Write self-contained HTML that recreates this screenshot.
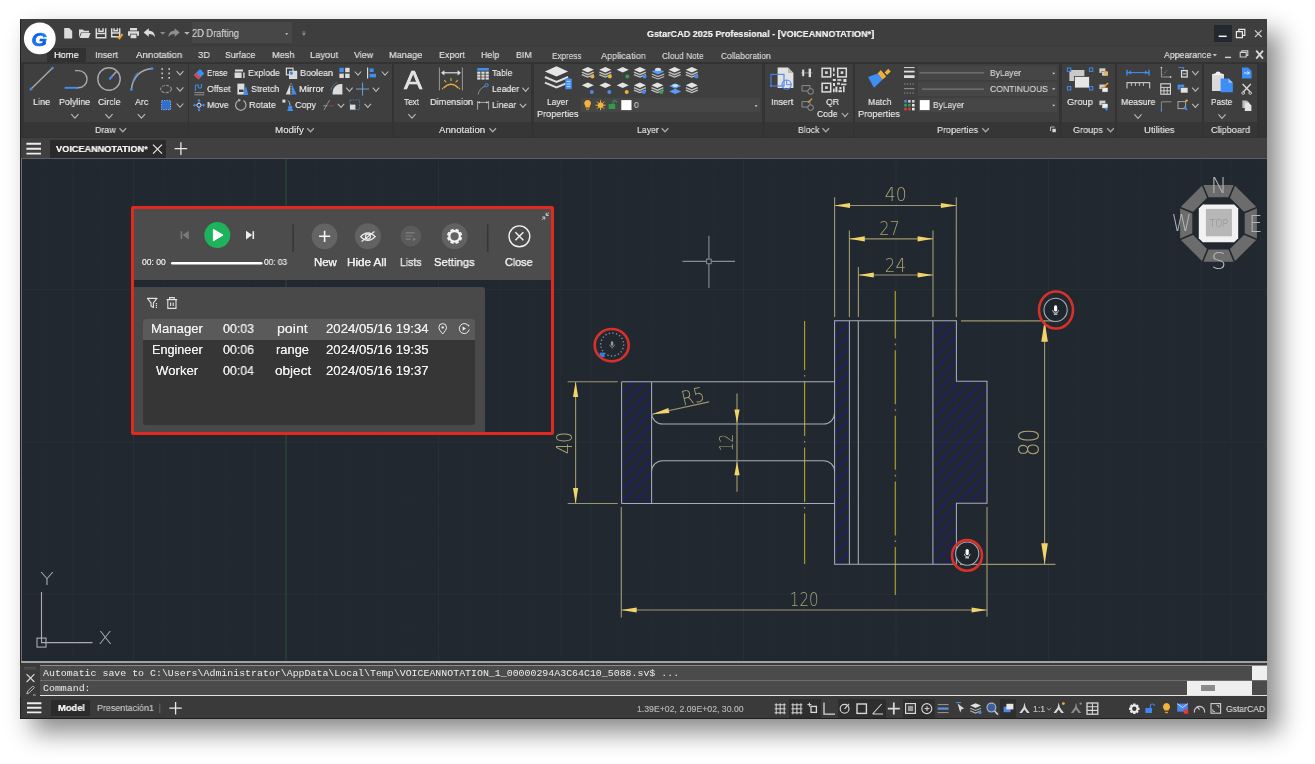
<!DOCTYPE html>
<html lang="en"><head><meta charset="utf-8"><title>GstarCAD 2025 Professional - [VOICEANNOTATION*]</title>
<style>
html,body{margin:0;padding:0}
body{width:1315px;height:764px;background:#fff;position:relative;overflow:hidden;font-family:"Liberation Sans",sans-serif}
body>div{position:absolute}
.t{position:absolute;white-space:nowrap;transform-origin:0 50%;will-change:transform;text-shadow:0 0 .6px currentColor}
.ls{font-family:"Liberation Sans",sans-serif}
.lm{font-family:"Liberation Mono",monospace;text-shadow:none}
svg{position:absolute;left:0;top:0;will-change:transform}
svg text{font-family:"DejaVu Sans Light","DejaVu Sans",sans-serif;font-weight:200}
</style></head><body>
<div style="left:20.0px;top:19.0px;width:1246.8px;height:700.2px;background:#3a3a3a;box-shadow:12px 13px 24px 0px rgba(0,0,0,.47);"></div>
<div style="left:20.0px;top:19.0px;width:1246.8px;height:27.0px;background:#3e3e3e;"></div>
<div style="left:20.0px;top:44.6px;width:1246.8px;height:1.8px;background:#3a3a3a;"></div>
<div style="left:20.0px;top:46.4px;width:1246.8px;height:15.6px;background:#404040;"></div>
<div style="left:47.2px;top:48.0px;width:38.4px;height:14.0px;background:#313131;"></div>
<div style="left:20.0px;top:62.0px;width:1246.8px;height:75.5px;background:#333333;"></div>
<div style="left:23.6px;top:63.8px;width:164.0px;height:58.5px;background:#3f3f3f;"></div>
<div style="left:23.6px;top:122.3px;width:164.0px;height:14.5px;background:#363636;"></div>
<div style="left:188.8px;top:63.8px;width:203.5px;height:58.5px;background:#3f3f3f;"></div>
<div style="left:188.8px;top:122.3px;width:203.5px;height:14.5px;background:#363636;"></div>
<div style="left:393.8px;top:63.8px;width:137.5px;height:58.5px;background:#3f3f3f;"></div>
<div style="left:393.8px;top:122.3px;width:137.5px;height:14.5px;background:#363636;"></div>
<div style="left:533.8px;top:63.8px;width:228.6px;height:58.5px;background:#3f3f3f;"></div>
<div style="left:533.8px;top:122.3px;width:228.6px;height:14.5px;background:#363636;"></div>
<div style="left:764.6px;top:63.8px;width:88.0px;height:58.5px;background:#3f3f3f;"></div>
<div style="left:764.6px;top:122.3px;width:88.0px;height:14.5px;background:#363636;"></div>
<div style="left:855.0px;top:63.8px;width:204.4px;height:58.5px;background:#3f3f3f;"></div>
<div style="left:855.0px;top:122.3px;width:204.4px;height:14.5px;background:#363636;"></div>
<div style="left:1062.0px;top:63.8px;width:53.0px;height:58.5px;background:#3f3f3f;"></div>
<div style="left:1062.0px;top:122.3px;width:53.0px;height:14.5px;background:#363636;"></div>
<div style="left:1117.2px;top:63.8px;width:85.1px;height:58.5px;background:#3f3f3f;"></div>
<div style="left:1117.2px;top:122.3px;width:85.1px;height:14.5px;background:#363636;"></div>
<div style="left:1204.4px;top:63.8px;width:52.6px;height:58.5px;background:#3f3f3f;"></div>
<div style="left:1204.4px;top:122.3px;width:52.6px;height:14.5px;background:#363636;"></div>
<div style="left:20.0px;top:137.5px;width:1246.8px;height:20.8px;background:#404040;"></div>
<div style="left:50.3px;top:140.4px;width:115.7px;height:17.9px;background:#2a2a2a;"></div>
<div style="left:20.0px;top:158.3px;width:1246.8px;height:502.7px;background:#212830;"></div>
<div style="left:20.0px;top:158.0px;width:1246.8px;height:1.2px;background:#5b5f64;"></div>
<div style="left:20.0px;top:158.3px;width:1.8px;height:502.7px;background:#6c7076;"></div>
<div style="left:20.0px;top:660.6px;width:1246.8px;height:2.2px;background:#a2a2a2;"></div>
<div style="left:20.0px;top:662.8px;width:1246.8px;height:34.7px;background:#3a3a3a;"></div>
<div style="left:39.6px;top:665.3px;width:1227.2px;height:29.7px;background:#8d8d8d;"></div>
<div style="left:39.6px;top:694.8px;width:1227.2px;height:1.4px;background:#e4e4e4;"></div>
<div style="left:40.4px;top:680.0px;width:1226.4px;height:1.0px;background:#6e6e6e;"></div>
<div style="left:40.4px;top:666.2px;width:1226.4px;height:13.8px;background:#4b4b4b;"></div>
<div style="left:40.4px;top:681.0px;width:1226.4px;height:14.0px;background:#4b4b4b;"></div>
<div style="left:1252.0px;top:666.2px;width:14.8px;height:13.8px;background:#efefef;"></div>
<div style="left:1187.0px;top:681.0px;width:65.0px;height:14.0px;background:#efefef;"></div>
<div style="left:1201.4px;top:685.4px;width:13.9px;height:5.6px;background:#8a8a8a;"></div>
<div style="left:20.0px;top:697.5px;width:1246.8px;height:21.7px;background:#3a3a3a;"></div>
<div style="left:51.2px;top:700.4px;width:39.3px;height:15.4px;background:#2b2b2b;"></div>
<div style="left:20.0px;top:718.0px;width:1246.8px;height:1.2px;background:#1e1e1e;"></div>
<div style="left:20.0px;top:19.0px;width:1.0px;height:700.2px;background:#222222;"></div>
<div style="left:191.8px;top:21.6px;width:100.2px;height:21.6px;background:#474747;"></div>
<div style="left:1213.7px;top:24.8px;width:18.0px;height:17.2px;background:#23272e;"></div>
<div style="left:580.8px;top:98.2px;width:179.0px;height:14.0px;background:#464646;"></div>
<div style="left:917.7px;top:66.4px;width:139.1px;height:13.5px;background:#464646;"></div>
<div style="left:917.7px;top:81.6px;width:139.1px;height:14.0px;background:#464646;"></div>
<div style="left:917.7px;top:97.9px;width:139.1px;height:14.3px;background:#464646;"></div>
<div style="left:20.0px;top:665.0px;width:19.4px;height:32.0px;background:#3a3a3a;"></div>
<div style="left:789.0px;top:699.4px;width:32.0px;height:18.6px;background:#2e2e2e;"></div>
<div style="left:838.0px;top:699.4px;width:48.0px;height:18.6px;background:#2e2e2e;"></div>
<div style="left:902.7px;top:699.4px;width:32.3px;height:18.6px;background:#2e2e2e;"></div>
<div style="left:1000.3px;top:699.4px;width:15.7px;height:18.6px;background:#2e2e2e;"></div>
<svg width="1315" height="764" viewBox="0 0 1315 764">
<path d="M42.0 159 V660.6" stroke="#232a33" stroke-width="1"/><path d="M72.5 159 V660.6" stroke="#232a33" stroke-width="1"/><path d="M103.0 159 V660.6" stroke="#232a33" stroke-width="1"/><path d="M133.5 159 V660.6" stroke="#272f38" stroke-width="1"/><path d="M164.0 159 V660.6" stroke="#232a33" stroke-width="1"/><path d="M194.5 159 V660.6" stroke="#232a33" stroke-width="1"/><path d="M225.0 159 V660.6" stroke="#232a33" stroke-width="1"/><path d="M255.5 159 V660.6" stroke="#232a33" stroke-width="1"/><path d="M286.0 159 V660.6" stroke="#272f38" stroke-width="1"/><path d="M316.5 159 V660.6" stroke="#232a33" stroke-width="1"/><path d="M347.0 159 V660.6" stroke="#232a33" stroke-width="1"/><path d="M377.5 159 V660.6" stroke="#232a33" stroke-width="1"/><path d="M408.0 159 V660.6" stroke="#232a33" stroke-width="1"/><path d="M438.5 159 V660.6" stroke="#272f38" stroke-width="1"/><path d="M469.0 159 V660.6" stroke="#232a33" stroke-width="1"/><path d="M499.5 159 V660.6" stroke="#232a33" stroke-width="1"/><path d="M530.0 159 V660.6" stroke="#232a33" stroke-width="1"/><path d="M560.5 159 V660.6" stroke="#232a33" stroke-width="1"/><path d="M591.0 159 V660.6" stroke="#272f38" stroke-width="1"/><path d="M621.5 159 V660.6" stroke="#232a33" stroke-width="1"/><path d="M652.0 159 V660.6" stroke="#232a33" stroke-width="1"/><path d="M682.5 159 V660.6" stroke="#232a33" stroke-width="1"/><path d="M713.0 159 V660.6" stroke="#232a33" stroke-width="1"/><path d="M743.5 159 V660.6" stroke="#272f38" stroke-width="1"/><path d="M774.0 159 V660.6" stroke="#232a33" stroke-width="1"/><path d="M804.5 159 V660.6" stroke="#232a33" stroke-width="1"/><path d="M835.0 159 V660.6" stroke="#232a33" stroke-width="1"/><path d="M865.5 159 V660.6" stroke="#232a33" stroke-width="1"/><path d="M896.0 159 V660.6" stroke="#272f38" stroke-width="1"/><path d="M926.5 159 V660.6" stroke="#232a33" stroke-width="1"/><path d="M957.0 159 V660.6" stroke="#232a33" stroke-width="1"/><path d="M987.5 159 V660.6" stroke="#232a33" stroke-width="1"/><path d="M1018.0 159 V660.6" stroke="#232a33" stroke-width="1"/><path d="M1048.5 159 V660.6" stroke="#272f38" stroke-width="1"/><path d="M1079.0 159 V660.6" stroke="#232a33" stroke-width="1"/><path d="M1109.5 159 V660.6" stroke="#232a33" stroke-width="1"/><path d="M1140.0 159 V660.6" stroke="#232a33" stroke-width="1"/><path d="M1170.5 159 V660.6" stroke="#232a33" stroke-width="1"/><path d="M1201.0 159 V660.6" stroke="#272f38" stroke-width="1"/><path d="M1231.5 159 V660.6" stroke="#232a33" stroke-width="1"/><path d="M1262.0 159 V660.6" stroke="#232a33" stroke-width="1"/><path d="M21.8 167.6 H1266.8" stroke="#232a33" stroke-width="1"/><path d="M21.8 198.1 H1266.8" stroke="#232a33" stroke-width="1"/><path d="M21.8 228.6 H1266.8" stroke="#232a33" stroke-width="1"/><path d="M21.8 259.1 H1266.8" stroke="#232a33" stroke-width="1"/><path d="M21.8 289.6 H1266.8" stroke="#272f38" stroke-width="1"/><path d="M21.8 320.1 H1266.8" stroke="#232a33" stroke-width="1"/><path d="M21.8 350.6 H1266.8" stroke="#232a33" stroke-width="1"/><path d="M21.8 381.1 H1266.8" stroke="#232a33" stroke-width="1"/><path d="M21.8 411.6 H1266.8" stroke="#232a33" stroke-width="1"/><path d="M21.8 442.1 H1266.8" stroke="#272f38" stroke-width="1"/><path d="M21.8 472.6 H1266.8" stroke="#232a33" stroke-width="1"/><path d="M21.8 503.1 H1266.8" stroke="#232a33" stroke-width="1"/><path d="M21.8 533.6 H1266.8" stroke="#232a33" stroke-width="1"/><path d="M21.8 564.1 H1266.8" stroke="#232a33" stroke-width="1"/><path d="M21.8 594.6 H1266.8" stroke="#272f38" stroke-width="1"/><path d="M21.8 625.1 H1266.8" stroke="#232a33" stroke-width="1"/><path d="M21.8 655.6 H1266.8" stroke="#232a33" stroke-width="1"/>
<path d="M286 159 V660.6" stroke="#2a4a38" stroke-width="1"/>
<path d="M682.5 261.4 H735 M708.9 235.7 V288" stroke="#878c94" stroke-width="1.1"/><rect x="706.6" y="259.1" width="4.6" height="4.6" fill="#212830" stroke="#878c94" stroke-width="1"/>
<path d="M41.5 592 V642.6 H92.5" fill="none" stroke="#a9adb3" stroke-width="1.1"/><rect x="37" y="638.1" width="9" height="9" fill="none" stroke="#a9adb3" stroke-width="1.1"/>
<text x="47" y="585.2" text-anchor="middle" font-size="16.9" fill="#a2a6ac" textLength="14" lengthAdjust="spacingAndGlyphs">Y</text>
<text x="105.3" y="643.6" text-anchor="middle" font-size="16.9" fill="#a2a6ac" textLength="14.4" lengthAdjust="spacingAndGlyphs">X</text>
<defs><pattern id="h" width="8.5" height="8.5" patternUnits="userSpaceOnUse" patternTransform="rotate(-45)"><path d="M0 4.25 H8.5" stroke="#1d1d72" stroke-width="1.5"/></pattern></defs>
<rect x="621.6" y="381.7" width="30.0" height="121.8" fill="url(#h)"/>
<rect x="834.6" y="320.8" width="14.8" height="243.5" fill="url(#h)"/>
<rect x="932.9" y="320.8" width="23.5" height="243.5" fill="url(#h)"/>
<rect x="956.2" y="381.3" width="30.8" height="122.0" fill="url(#h)"/>
<path d="M804.6 321 V564" stroke="#a59c30" stroke-width="1.2" stroke-dasharray="54.4 5 1.6 5" stroke-dashoffset="5.5"/>
<path d="M895.3 291 V595" stroke="#a59c30" stroke-width="1.2" stroke-dasharray="54 5 1.6 5" stroke-dashoffset="6.4"/>
<path d="M621.6 381.7 H834.6 M621.6 503.5 H834.6 M621.6 381.7 V503.5 M651.6 381.7 V503.5 M651.6 413 A11 11 0 0 0 662.6 424 H823.6 A11 11 0 0 0 834.6 413 M651.6 471.7 A11 11 0 0 1 662.6 460.7 H823.6 A11 11 0 0 1 834.6 471.7 M834.6 320.8 H956.4 V381.3 H987 V503.3 H956.4 V564.3 H834.6 Z M849.4 320.8 V564.3 M858.3 320.8 V564.3 M932.9 320.8 V564.3" fill="none" stroke="#a9aeb6" stroke-width="1.05"/>
<path d="M834.6 197.3 V317 M956.3 197.3 V317 M834.6 205.5 H956.3 M849.4 230.4 V317 M933 230.4 V317 M849.4 238.8 H933 M858.4 266.9 V317 M858.4 275 H933 M567.7 381.7 H617.7 M567.7 503.5 H617.7 M575.6 381.7 V503.5 M737 393.6 V491.7 M652.2 414.2 L709.1 401.9 M961 320.8 H1054.5 M960 564.3 H1055.4 M1044.6 320.8 V564.3 M621.3 507 V617.5 M987 507 V616.7 M621.3 610 H987" fill="none" stroke="#9c966e" stroke-width="1.15"/>
<path d="M834.6 205.5 L850.0 208.1 L850.0 202.9z" fill="#f3d46a"/>
<path d="M956.3 205.5 L940.9 202.9 L940.9 208.1z" fill="#f3d46a"/>
<path d="M849.4 238.8 L864.8 241.4 L864.8 236.2z" fill="#f3d46a"/>
<path d="M933.0 238.8 L917.6 236.2 L917.6 241.4z" fill="#f3d46a"/>
<path d="M858.4 275.0 L873.8 277.6 L873.8 272.4z" fill="#f3d46a"/>
<path d="M933.0 275.0 L917.6 272.4 L917.6 277.6z" fill="#f3d46a"/>
<path d="M575.6 381.7 L573.0 397.1 L578.2 397.1z" fill="#f3d46a"/>
<path d="M575.6 503.5 L578.2 488.1 L573.0 488.1z" fill="#f3d46a"/>
<path d="M737.0 423.4 L739.6 409.4 L734.4 409.4z" fill="#f3d46a"/>
<path d="M737.0 461.2 L734.4 475.2 L739.6 475.2z" fill="#f3d46a"/>
<path d="M652.2 414.2 L669.4 413.1 L668.3 408.1z" fill="#f3d46a"/>
<path d="M1044.6 320.8 L1041.3 341.8 L1047.9 341.8z" fill="#f3d46a"/>
<path d="M1044.6 564.3 L1047.9 543.3 L1041.3 543.3z" fill="#f3d46a"/>
<path d="M621.3 610.0 L636.7 612.6 L636.7 607.4z" fill="#f3d46a"/>
<path d="M987.0 610.0 L971.6 607.4 L971.6 612.6z" fill="#f3d46a"/>
<text x="895.8" y="201.2" font-size="20.0" fill="#a8a172" text-anchor="middle" textLength="21.9" lengthAdjust="spacingAndGlyphs" transform="rotate(0.0 895.8 193.9)">40</text>
<text x="889.6" y="235.1" font-size="20.0" fill="#a8a172" text-anchor="middle" textLength="20.6" lengthAdjust="spacingAndGlyphs" transform="rotate(0.0 889.6 227.8)">27</text>
<text x="895.4" y="271.6" font-size="20.0" fill="#a8a172" text-anchor="middle" textLength="21.2" lengthAdjust="spacingAndGlyphs" transform="rotate(0.0 895.4 264.3)">24</text>
<text x="564.6" y="450.5" font-size="20.6" fill="#a8a172" text-anchor="middle" textLength="22.2" lengthAdjust="spacingAndGlyphs" transform="rotate(-90.0 564.6 443.0)">40</text>
<text x="725.7" y="450.0" font-size="20.2" fill="#a8a172" text-anchor="middle" textLength="17.2" lengthAdjust="spacingAndGlyphs" transform="rotate(-90.0 725.7 442.6)">12</text>
<text x="692.8" y="403.3" font-size="20.0" fill="#a8a172" text-anchor="middle" textLength="22.8" lengthAdjust="spacingAndGlyphs" transform="rotate(-13.0 692.8 396.0)">R5</text>
<text x="1028.9" y="452.7" font-size="28.0" fill="#a8a172" text-anchor="middle" textLength="27.7" lengthAdjust="spacingAndGlyphs" transform="rotate(-90.0 1028.9 442.5)">80</text>
<text x="804.2" y="606.0" font-size="19.2" fill="#a8a172" text-anchor="middle" textLength="28.7" lengthAdjust="spacingAndGlyphs" transform="rotate(0.0 804.2 599.0)">120</text>
<circle cx="612.2" cy="344.5" r="11.5" fill="none" stroke="#8f949a" stroke-width="1.3" stroke-dasharray="1.3 2.3"/>
<rect x="610.9" y="341.3" width="2.4" height="4.4" rx="1.2" fill="#9a9a9a"/><path d="M609.8 344.6 a2.4 2.4 0 0 0 4.8 0 M612.2 347 v1.6" fill="none" stroke="#8a8a8a" stroke-width="0.8"/>
<rect x="599.6" y="352.6" width="5" height="4.6" fill="#2f7fe8"/>
<ellipse cx="611.7" cy="345.2" rx="17" ry="16.2" fill="none" stroke="#d8302a" stroke-width="2.6"/>
<circle cx="1055.6" cy="309.9" r="11.6" fill="#1f252d" stroke="#aab0b4" stroke-width="1.1"/>
<rect x="1054.0" y="305.3" width="3.2" height="6.2" rx="1.6" fill="#ffffff"/><path d="M1052.7 310.1 a2.9 2.9 0 0 0 5.8 0" fill="none" stroke="#d8d8d8" stroke-width="0.8"/><path d="M1053.8 314.1 h3.6" stroke="#e8e8e8" stroke-width="1.2"/>
<ellipse cx="1056" cy="310" rx="17" ry="18.5" fill="none" stroke="#d8302a" stroke-width="2.6"/>
<circle cx="967.2" cy="553.6" r="11.6" fill="#1f252d" stroke="#aab0b4" stroke-width="1.1"/>
<rect x="965.6" y="549.0" width="3.2" height="6.2" rx="1.6" fill="#ffffff"/><path d="M964.3 553.8 a2.9 2.9 0 0 0 5.8 0" fill="none" stroke="#d8d8d8" stroke-width="0.8"/><path d="M965.4 557.8 h3.6" stroke="#e8e8e8" stroke-width="1.2"/>
<ellipse cx="967" cy="555.4" rx="15" ry="15.3" fill="none" stroke="#d8302a" stroke-width="2.6"/>
<polygon points="1256.9,239.3 1234.4,261.8 1202.6,261.8 1180.1,239.3 1180.1,207.5 1202.6,185.0 1234.4,185.0 1256.9,207.5" fill="#6c6c6c"/>
<polygon points="1244.7,234.3 1229.4,249.6 1207.6,249.6 1192.3,234.3 1192.3,212.5 1207.6,197.2 1229.4,197.2 1244.7,212.5" fill="#212830"/>
<path d="M1243.4 233.7 L1258.2 239.9 M1228.8 248.3 L1235.0 263.1 M1208.2 248.3 L1202.0 263.1 M1193.6 233.7 L1178.8 239.9 M1193.6 213.1 L1178.8 206.9 M1208.2 198.5 L1202.0 183.7 M1228.8 198.5 L1235.0 183.7 M1243.4 213.1 L1258.2 206.9 " stroke="#212830" stroke-width="1.6"/>
<path d="M1202.8 204.5 h31.4 l4 4 v29.8 l-4 4 h-31.4 l-4 -4 v-29.8z" fill="#f2f2f2"/>
<rect x="1205.9" y="208.9" width="26" height="27.4" fill="#b7b7b7"/>
<text x="1218.9" y="227.1" text-anchor="middle" font-size="10" fill="#8c8c8c" textLength="18.4" lengthAdjust="spacingAndGlyphs" style="font-weight:400">TOP</text>
<text x="1218.7" y="193.4" text-anchor="middle" font-size="21.3" fill="#b4b4b4" textLength="16.1" lengthAdjust="spacingAndGlyphs">N</text>
<text x="1218.7" y="268.6" text-anchor="middle" font-size="22.6" fill="#b4b4b4" textLength="15.4" lengthAdjust="spacingAndGlyphs">S</text>
<text x="1181.6" y="231.2" text-anchor="middle" font-size="22.5" fill="#b4b4b4" textLength="19.8" lengthAdjust="spacingAndGlyphs">W</text>
<text x="1255.6" y="231.7" text-anchor="middle" font-size="22.8" fill="#b4b4b4" textLength="13.4" lengthAdjust="spacingAndGlyphs">E</text>
</svg>
<div style="left:134.0px;top:208.0px;width:417.0px;height:72.3px;background:#4c4c4c;"></div>
<div style="left:134.0px;top:286.6px;width:351.4px;height:146.4px;background:#494949;border-radius:0 3px 0 0;"></div>
<div style="left:142.6px;top:318.8px;width:332.6px;height:105.8px;background:#363636;border-radius:3px;"></div>
<div style="left:142.6px;top:318.8px;width:332.6px;height:20.9px;background:#5a5a5a;border-radius:3px 3px 0 0;"></div>
<div style="left:131.3px;top:206.0px;width:423.0px;height:229.2px;background:transparent;box-sizing:border-box;border:3.2px solid #e02a20;border-radius:2px;"></div>
<svg width="1315" height="764" viewBox="0 0 1315 764">
<defs><linearGradient id="lg" x1="1" y1="0" x2="0" y2="1"><stop offset="0" stop-color="#3cc0f2"/><stop offset=".45" stop-color="#0a58e8"/><stop offset="1" stop-color="#2a8cf0"/></linearGradient></defs>
<circle cx="39.8" cy="38.4" r="15.9" fill="#ffffff"/>
<text x="39.4" y="45.8" text-anchor="middle" textLength="15.6" lengthAdjust="spacingAndGlyphs" style="font-family:'Liberation Sans',sans-serif;font-weight:bold;font-style:italic;font-size:19px" fill="url(#lg)" stroke="url(#lg)" stroke-width=".7">G</text>
<path d="M64.2 28 h5 l3 3 v7.5 h-8z" fill="#dcdcdc"/>
<path d="M79 29.5 h4 l1 1.3 h5 v1.6 h-8 l-2 5z M81.6 33 h9 l-2 5 h-9z" fill="#dcdcdc"/>
<path d="M96.3 28.2 v9.6 h9.4 v-9.6 M96.3 33.4 h9.4 M99 28.2 v3 h4 v-3" fill="none" stroke="#dcdcdc" stroke-width="1.5"/>
<path d="M111.7 28.2 v8.6 h8 v-8.6 M111.7 33 h8 M114 28.2 v2.6 h3.4 v-2.6" fill="none" stroke="#dcdcdc" stroke-width="1.5"/>
<path d="M117 36.5 l2.5 2 l3 -4.5" fill="none" stroke="#f0a030" stroke-width="1.8"/>
<path d="M130 28 h7 v2.4 h-7z M128 31.2 h11 v4.6 h-2 v-2 h-7 v2 h-2z M130.6 34.6 h5.8 v3.6 h-5.8z" fill="#dcdcdc"/>
<path d="M143.6 32.6 l5.2 -4.4 v2.6 c3.6 0 6 2 6.2 6.4 c-1.4 -2.4 -3.2 -3.2 -6.2 -3.2 v2.8z" fill="#dcdcdc"/>
<path d="M160 32 h5.4 l-2.7 2.8z" fill="#8a8a8a"/>
<path d="M179.8 32.6 l-5.2 -4.4 v2.6 c-3.6 0 -6 2 -6.2 6.4 c1.4 -2.4 3.2 -3.2 6.2 -3.2 v2.8z" fill="#8e8e8e"/>
<path d="M184.2 32 h5.4 l-2.7 2.8z" fill="#b8b8b8"/>
<path d="M285.2 33.2 h3 l-1.5 1.8z" fill="#cfcfcf"/>
<path d="M302.2 32 h3.4 M302.6 33.6 h2.6 l-1.3 1.8z" stroke="#8f8f8f" stroke-width="0.8" fill="#8f8f8f"/>
<path d="M1218.7 36.3 h8" stroke="#f2f2f2" stroke-width="1.5"/>
<path d="M1236.4 31.6 h6 v6 h-6z M1238.8 31.6 v-2.2 h6 v6 h-2.2" fill="none" stroke="#e6e6e6" stroke-width="1.2"/>
<path d="M1255 30.4 l6.6 6.6 M1261.6 30.4 l-6.6 6.6" stroke="#d0d0d0" stroke-width="1.2"/>
<path d="M1212.6 54 h4.4 l-2.2 2.4z" fill="#bdbdbd"/>
<path d="M1225 57.4 h6" stroke="#d0d0d0" stroke-width="1.4"/>
<path d="M1240.2 52.4 h6 v4.6 h-6z M1241.8 52.4 v-1.6 h6 v4.6 h-1.6" fill="none" stroke="#d0d0d0" stroke-width="1.1"/>
<path d="M1256.2 50.6 l6.8 8 M1263 50.6 l-6.8 8" stroke="#d8d8d8" stroke-width="1.8"/>
<path d="M119.5 128.2 L122.8 131.8 L126.1 128.2" fill="none" stroke="#a8a8a8" stroke-width="1.3"/>
<path d="M307.2 128.2 L310.5 131.8 L313.8 128.2" fill="none" stroke="#a8a8a8" stroke-width="1.3"/>
<path d="M489.4 128.2 L492.7 131.8 L496.0 128.2" fill="none" stroke="#a8a8a8" stroke-width="1.3"/>
<path d="M661.7 128.2 L665.0 131.8 L668.3 128.2" fill="none" stroke="#a8a8a8" stroke-width="1.3"/>
<path d="M822.5 128.2 L825.8 131.8 L829.1 128.2" fill="none" stroke="#a8a8a8" stroke-width="1.3"/>
<path d="M982.3 128.2 L985.6 131.8 L988.9 128.2" fill="none" stroke="#a8a8a8" stroke-width="1.3"/>
<path d="M1107.2 128.2 L1110.5 131.8 L1113.8 128.2" fill="none" stroke="#a8a8a8" stroke-width="1.3"/>
<path d="M1050.6 127 h4 M1050.6 127 v4" stroke="#c8c8c8" stroke-width="0.9" fill="none"/><path d="M1052.4 128.8 h3.4 v3.4 h-3.4z" fill="#d8d8d8"/>
<path d="M31 89 L52.5 68" stroke="#a9a9a9" stroke-width="1.4"/>
<circle cx="31" cy="89" r="1.5" fill="#3f8ef0"/><circle cx="52.5" cy="68" r="1.3" fill="#3f8ef0"/>
<path d="M75 70.6 h3.4 a8.6 8.6 0 0 1 0 17.2 h-3" fill="none" stroke="#a9a9a9" stroke-width="1.4"/>
<path d="M64.6 87.8 h13.4" stroke="#3f8ef0" stroke-width="1.9"/>
<path d="M71.3 114.2 L74.9 118.2 L78.5 114.2" fill="none" stroke="#b9b9b9" stroke-width="1.1"/>
<circle cx="109" cy="79" r="11.2" fill="none" stroke="#a9a9a9" stroke-width="1.4"/>
<path d="M109.5 79 L117 71" stroke="#a9a9a9" stroke-width="1.4"/><path d="M109.3 79.4 L112.6 76" stroke="#3f8ef0" stroke-width="2"/>
<path d="M105.4 114.2 L109.0 118.2 L112.6 114.2" fill="none" stroke="#b9b9b9" stroke-width="1.1"/>
<path d="M131.4 89.5 C132.5 78 140 69.5 152 68.6" fill="none" stroke="#a9a9a9" stroke-width="1.5"/>
<circle cx="131.4" cy="89.5" r="1.4" fill="#3f8ef0"/><circle cx="152" cy="68.6" r="1.4" fill="#3f8ef0"/><path d="M132.6 82 C134 77 136 74.6 138 72.6" fill="none" stroke="#3f8ef0" stroke-width="1.4" opacity=".7"/>
<path d="M137.8 114.2 L141.4 118.2 L145.0 114.2" fill="none" stroke="#b9b9b9" stroke-width="1.1"/>
<rect x="161.4" y="68.2" width="1.6" height="1.6" fill="#d0d0d0"/><rect x="168.4" y="68.2" width="1.6" height="1.6" fill="#d0d0d0"/>
<rect x="161.4" y="72.6" width="1.6" height="1.6" fill="#d0d0d0"/><rect x="168.4" y="72.6" width="1.6" height="1.6" fill="#d0d0d0"/>
<rect x="161.4" y="77.0" width="1.6" height="1.6" fill="#d0d0d0"/><rect x="168.4" y="77.0" width="1.6" height="1.6" fill="#d0d0d0"/>
<path d="M176.6 71.1 L180.0 74.9 L183.4 71.1" fill="none" stroke="#b9b9b9" stroke-width="1.1"/>
<ellipse cx="166" cy="89" rx="5.4" ry="3.6" fill="none" stroke="#8e8e8e" stroke-width="1.2" stroke-dasharray="3 1.2"/>
<path d="M176.6 87.3 L180.0 91.1 L183.4 87.3" fill="none" stroke="#b9b9b9" stroke-width="1.1"/>
<rect x="161.6" y="100.6" width="9" height="9" fill="#2f6fd0" stroke="#9fc0f0" stroke-width="0.8" stroke-dasharray="1.4 1"/>
<path d="M176.6 103.5 L180.0 107.3 L183.4 103.5" fill="none" stroke="#b9b9b9" stroke-width="1.1"/>
<path d="M194 75 l6 -6 l4.4 4.4 l-6 6z" fill="#3d8df5"/><path d="M194 75 l2.2 -2.2 l4.4 4.4 l-2.2 2.2z" fill="#e04545"/>
<path d="M235 69.4 h8 v2 h-8z M234.6 72.6 h7 v5.4 h-7z M243.2 72.6 h1.4 v5.4 h-1.4z" fill="#dcdcdc"/>
<rect x="286.4" y="68.2" width="6.6" height="6.6" fill="none" stroke="#dcdcdc" stroke-width="1.2"/><rect x="289.6" y="71.4" width="7" height="7" fill="#d8d8d8" stroke="#dcdcdc" stroke-width="1.2"/><rect x="289.8" y="71.6" width="3" height="3" fill="#3f8ef0"/>
<rect x="339.4" y="67.8" width="4.4" height="4.4" fill="#3f8ef0"/>
<rect x="345.2" y="67.8" width="4.4" height="4.4" fill="#dcdcdc"/>
<rect x="339.4" y="73.6" width="4.4" height="4.4" fill="#dcdcdc"/>
<rect x="345.2" y="73.6" width="4.4" height="4.4" fill="#dcdcdc"/>
<path d="M354.8 71.5 L358.0 75.1 L361.2 71.5" fill="none" stroke="#b9b9b9" stroke-width="1.1"/>
<path d="M367.6 67.4 v11" stroke="#dcdcdc" stroke-width="1.2"/><rect x="369.6" y="68.4" width="4" height="3.6" fill="#3f8ef0"/><rect x="369.6" y="73.8" width="6.4" height="3.6" fill="#3f8ef0"/>
<path d="M381.8 71.5 L385.0 75.1 L388.2 71.5" fill="none" stroke="#b9b9b9" stroke-width="1.1"/>
<path d="M194.4 92.6 h10 M194.4 94.8 h10" stroke="#9a9a9a" stroke-width="0.9"/><path d="M195.4 91 v-6 h3 v3 h3 v-4" fill="none" stroke="#3f8ef0" stroke-width="1"/>
<path d="M237.4 83.6 h7 v11 h-7z" fill="#dcdcdc"/><path d="M243 95 l3 -9 l2.4 9z" fill="#3f8ef0"/><path d="M239 89.6 h4.6 v2.4 h-4.6z" fill="#3b3b3b"/>
<path d="M285.8 94.6 l4.4 -10.4 v10.4z" fill="#dcdcdc"/><path d="M292 94.6 v-10.4 l4.6 10.4z" fill="#3f8ef0"/><path d="M291 83 v13" stroke="#c0c0c0" stroke-width="0.7" stroke-dasharray="1.6 1"/>
<path d="M332.6 94.4 v-2 a8.4 8.4 0 0 1 8.4 -8.4 h1.4 v10.4z" fill="#dcdcdc"/><path d="M331 90 a10 10 0 0 1 6 -7.4" fill="none" stroke="#54708f" stroke-width="1"/>
<path d="M346.2 87.7 L349.4 91.3 L352.6 87.7" fill="none" stroke="#b9b9b9" stroke-width="1.1"/>
<path d="M362.6 82.6 v13 M356 89 h13" stroke="#6f9fd6" stroke-width="1"/>
<path d="M372.8 87.7 L376.0 91.3 L379.2 87.7" fill="none" stroke="#b9b9b9" stroke-width="1.1"/>
<path d="M199 99.6 v11 M193.6 105.2 h11" stroke="#3f8ef0" stroke-width="1.2"/><circle cx="199" cy="105.2" r="2" fill="#3b3b3b" stroke="#dcdcdc" stroke-width="1"/><path d="M199 99 l-1.8 2 h3.6z M199 111.4 l-1.8 -2 h3.6z M193 105.2 l2 -1.8 v3.6z M205 105.2 l-2 -1.8 v3.6z" fill="#3f8ef0"/>
<path d="M243.4 100.6 a5.2 5.2 0 1 1 -4.4 -0.4" fill="none" stroke="#b0b0b0" stroke-width="1.2"/><path d="M238.2 98.6 l2.8 1.4 l-2.2 2z" fill="#b0b0b0"/>
<rect x="282.4" y="99.6" width="3" height="3" fill="#dcdcdc"/><path d="M288 100.6 q2.2 1 2 5" fill="none" stroke="#9fbfe8" stroke-width="1"/><path d="M287.2 111 a3 2.6 0 0 1 6 0z" fill="#3f8ef0"/><circle cx="290.2" cy="107.6" r="2.2" fill="#3f8ef0"/>
<path d="M324 110 l5.6 -10" stroke="#8e8e8e" stroke-width="1"/><path d="M323.4 105.8 h4" stroke="#9e9e9e" stroke-width="1"/><path d="M328.6 105.8 h5.4" stroke="#a04040" stroke-width="1"/>
<path d="M337.8 103.8 L341.0 107.4 L344.2 103.8" fill="none" stroke="#b9b9b9" stroke-width="1.1"/>
<rect x="350" y="100" width="9.6" height="9.6" fill="none" stroke="#4f84c8" stroke-width="0.9" stroke-dasharray="1.6 1.2"/><rect x="350" y="104.6" width="5.4" height="5" fill="#dcdcdc"/>
<path d="M364.6 103.8 L367.8 107.4 L371.0 103.8" fill="none" stroke="#b9b9b9" stroke-width="1.1"/>
<path d="M408.3 114.2 L411.9 118.2 L415.5 114.2" fill="none" stroke="#b9b9b9" stroke-width="1.1"/>
<path d="M439.4 67.6 v22.8 M462.4 67.6 v22.8" stroke="#9a9a9a" stroke-width="1"/>
<path d="M442 72.8 h18" stroke="#dcdcdc" stroke-width="1.2"/><path d="M441 72.8 l3.4 -2.6 v5.2z M461 72.8 l-3.4 -2.6 v5.2z" fill="#dcdcdc"/>
<path d="M443.6 88 q7.4 -7.4 14.8 0" fill="none" stroke="#e0a83a" stroke-width="1.5"/><path d="M446.4 82.4 l-2.2 -2.2 M451 81 v-3 M455.6 82.4 l2.2 -2.2" stroke="#e0a83a" stroke-width="1.1"/><circle cx="442.6" cy="88.6" r="0.8" fill="#e0a83a"/><circle cx="459.4" cy="88.6" r="0.8" fill="#e0a83a"/>
<rect x="477.2" y="68" width="11.6" height="2.6" fill="#3f8ef0"/>
<rect x="477.2" y="71.6" width="3.2" height="2.2" fill="#dcdcdc"/>
<rect x="481.4" y="71.6" width="3.2" height="2.2" fill="#dcdcdc"/>
<rect x="485.6" y="71.6" width="3.2" height="2.2" fill="#dcdcdc"/>
<rect x="477.2" y="74.5" width="3.2" height="2.2" fill="#dcdcdc"/>
<rect x="481.4" y="74.5" width="3.2" height="2.2" fill="#dcdcdc"/>
<rect x="485.6" y="74.5" width="3.2" height="2.2" fill="#dcdcdc"/>
<rect x="477.2" y="77.4" width="3.2" height="2.2" fill="#dcdcdc"/>
<rect x="481.4" y="77.4" width="3.2" height="2.2" fill="#dcdcdc"/>
<rect x="485.6" y="77.4" width="3.2" height="2.2" fill="#dcdcdc"/>
<path d="M478 94.6 q1.4 -6.6 7.4 -8.4" fill="none" stroke="#8e8e8e" stroke-width="1"/><circle cx="486.6" cy="85.2" r="1.6" fill="none" stroke="#3f8ef0" stroke-width="1"/>
<path d="M522.4 87.7 L525.6 91.3 L528.8 87.7" fill="none" stroke="#b9b9b9" stroke-width="1.1"/>
<path d="M477.6 102.4 h11 M477.6 101 v8.6 M488.6 101 v8.6" fill="none" stroke="#a8a8a8" stroke-width="1"/><path d="M477.6 102.4 l2.4 -1.2 v2.4z M488.6 102.4 l-2.4 -1.2 v2.4z" fill="#d0d0d0"/>
<path d="M519.8 103.8 L523.0 107.4 L526.2 103.8" fill="none" stroke="#b9b9b9" stroke-width="1.1"/>
<path d="M544.9 82.6 l11.6 4.9 l11.6 -4.9" fill="none" stroke="#dcdcdc" stroke-width="1.9"/><path d="M544.9 77.0 l11.6 4.9 l11.6 -4.9" fill="none" stroke="#dcdcdc" stroke-width="1.9"/><path d="M544.9 71.4 l11.6 -5.2 l11.6 5.2 l-11.6 5.2z" fill="#e6e6e6"/>
<rect x="565.2" y="78.6" width="6.6" height="10.6" rx="1" fill="#3f8ef0"/><path d="M566.6 81.4 h3.8 M566.6 84 h3.8 M566.6 86.6 h3.8" stroke="#cfe2ff" stroke-width="0.9"/>
<path d="M581.8 74.6 l6.0 2.5 l6.0 -2.5" fill="none" stroke="#c0c0c0" stroke-width="1.4"/><path d="M581.8 72.2 l6.0 2.5 l6.0 -2.5" fill="none" stroke="#c0c0c0" stroke-width="1.4"/><path d="M581.8 69.8 l6.0 -2.7 l6.0 2.7 l-6.0 2.7z" fill="#e4e4e4"/>
<circle cx="592.4" cy="76.6" r="2" fill="#f0b030"/>
<path d="M581.8 85.3 l6.0 -2.7 l6.0 2.7 l-6.0 2.7z" fill="#e4e4e4"/>
<circle cx="591.8" cy="92" r="2" fill="#4a8ae8"/>
<path d="M599.3 74.6 l6.0 2.5 l6.0 -2.5" fill="none" stroke="#c0c0c0" stroke-width="1.4"/><path d="M599.3 72.2 l6.0 2.5 l6.0 -2.5" fill="none" stroke="#c0c0c0" stroke-width="1.4"/><path d="M599.3 69.8 l6.0 -2.7 l6.0 2.7 l-6.0 2.7z" fill="#e4e4e4"/>
<circle cx="609.9" cy="76.6" r="2" fill="#f0b030"/>
<path d="M599.3 85.3 l6.0 -2.7 l6.0 2.7 l-6.0 2.7z" fill="#e4e4e4"/>
<circle cx="609.3" cy="92" r="2" fill="#4a8ae8"/>
<path d="M616.7 69.8 l6.0 -2.7 l6.0 2.7 l-6.0 2.7z" fill="#e4e4e4"/>
<circle cx="627.3" cy="76.6" r="2" fill="#2fa048"/>
<path d="M616.7 85.3 l6.0 -2.7 l6.0 2.7 l-6.0 2.7z" fill="#e4e4e4"/>
<circle cx="626.7" cy="92" r="2" fill="#f0b030"/>
<path d="M633.9 74.6 l6.0 2.5 l6.0 -2.5" fill="none" stroke="#c0c0c0" stroke-width="1.4"/><path d="M633.9 72.2 l6.0 2.5 l6.0 -2.5" fill="none" stroke="#c0c0c0" stroke-width="1.4"/><path d="M633.9 69.8 l6.0 -2.7 l6.0 2.7 l-6.0 2.7z" fill="#e4e4e4"/>
<circle cx="644.5" cy="76.6" r="2" fill="#4a8ae8"/>
<path d="M633.9 90.1 l6.0 2.5 l6.0 -2.5" fill="none" stroke="#c0c0c0" stroke-width="1.4"/><path d="M633.9 87.7 l6.0 2.5 l6.0 -2.5" fill="none" stroke="#c0c0c0" stroke-width="1.4"/><path d="M633.9 85.3 l6.0 -2.7 l6.0 2.7 l-6.0 2.7z" fill="#e4e4e4"/>
<circle cx="643.9" cy="92" r="2" fill="#4a8ae8"/>
<path d="M651.8 76.4 l6.2 2.6 l6.2 -2.6" fill="none" stroke="#bcbcbc" stroke-width="1.1"/><path d="M651.8 74.0 l6.2 2.6 l6.2 -2.6" fill="none" stroke="#bcbcbc" stroke-width="1.1"/><path d="M651.8 71.6 l6.2 -2.8 l6.2 2.8 l-6.2 2.8z" fill="#5a9cf5"/>
<ellipse cx="658.0" cy="69.4" rx="3" ry="1.6" fill="#cfe4ff"/>
<path d="M651.4 90.1 l6.0 2.5 l6.0 -2.5" fill="none" stroke="#c0c0c0" stroke-width="1.4"/><path d="M651.4 87.7 l6.0 2.5 l6.0 -2.5" fill="none" stroke="#c0c0c0" stroke-width="1.4"/><path d="M651.4 85.3 l6.0 -2.7 l6.0 2.7 l-6.0 2.7z" fill="#e4e4e4"/>
<circle cx="661.4" cy="92" r="2" fill="#3aa050"/>
<path d="M668.6 74.6 l6.0 2.5 l6.0 -2.5" fill="none" stroke="#c0c0c0" stroke-width="1.4"/><path d="M668.6 72.2 l6.0 2.5 l6.0 -2.5" fill="none" stroke="#c0c0c0" stroke-width="1.4"/><path d="M668.6 69.8 l6.0 -2.7 l6.0 2.7 l-6.0 2.7z" fill="#e4e4e4"/>
<path d="M669.2 86.0 l6.0 -2.7 l6.0 2.7 l-6.0 2.7z" fill="#5a9cf5"/>
<path d="M669.2 91.4 l6.0 -2.7 l6.0 2.7 l-6.0 2.7z" fill="#5a9cf5"/>
<ellipse cx="675.2" cy="85.6" rx="3" ry="1.4" fill="#cfe4ff"/>
<path d="M685.8 74.6 l6.0 2.5 l6.0 -2.5" fill="none" stroke="#c0c0c0" stroke-width="1.4"/><path d="M685.8 72.2 l6.0 2.5 l6.0 -2.5" fill="none" stroke="#c0c0c0" stroke-width="1.4"/><path d="M685.8 69.8 l6.0 -2.7 l6.0 2.7 l-6.0 2.7z" fill="#e4e4e4"/>
<circle cx="696.4" cy="76.6" r="2" fill="#4a8ae8"/>
<path d="M685.8 90.1 l6.0 2.5 l6.0 -2.5" fill="none" stroke="#c0c0c0" stroke-width="1.4"/><path d="M685.8 87.7 l6.0 2.5 l6.0 -2.5" fill="none" stroke="#c0c0c0" stroke-width="1.4"/><path d="M685.8 85.3 l6.0 -2.7 l6.0 2.7 l-6.0 2.7z" fill="#e4e4e4"/>
<path d="M587.6 100 a3.4 3.4 0 0 1 2.2 6 v1.4 h-4.4 v-1.4 a3.4 3.4 0 0 1 2.2 -6z" fill="#f2b43a"/><path d="M586 108.6 h3.2 v1.2 h-3.2z" fill="#c98a20"/>
<circle cx="600.6" cy="105.2" r="2.7" fill="#f2b43a"/><path d="M600.6 100.2 v10 M595.6 105.2 h10 M597 101.6 l7.2 7.2 M604.2 101.6 l-7.2 7.2" stroke="#f2b43a" stroke-width="1"/>
<rect x="608.6" y="104" width="6.6" height="5" fill="#2f9a48"/><path d="M613 104 v-1.6 a1.8 1.8 0 0 1 3.6 0" fill="none" stroke="#2f9a48" stroke-width="1.1"/>
<rect x="621.3" y="100.1" width="10.2" height="10" fill="#ffffff"/>
<path d="M754.6 105.2 h3 l-1.5 1.8z" fill="#d6d6d6"/>
<path d="M777.6 67.6 h10.4 l5.4 5.4 v15 h-15.8z" fill="#e2e2e2"/><path d="M788 67.6 v5.4 h5.4z" fill="#b8b8b8"/>
<rect x="771" y="74.4" width="13" height="11.6" fill="none" stroke="#4a86ea" stroke-width="1.1"/><circle cx="786.6" cy="84.6" r="4.6" fill="none" stroke="#4a86ea" stroke-width="1.1"/><path d="M786.6 80.2 v4.4 h4.4" fill="none" stroke="#4a86ea" stroke-width="0.9"/>
<circle cx="771" cy="86" r="1" fill="#4a86ea"/>
<path d="M801 72.9 h11.4" stroke="#9a9a9a" stroke-width="0.8"/><rect x="802.2" y="69.6" width="2" height="6.6" fill="#dcdcdc"/><rect x="808.6" y="68.6" width="2.4" height="8.6" fill="#dcdcdc"/>
<path d="M802 85.6 h8 v5.4 h-8z" fill="none" stroke="#8e8e8e" stroke-width="1"/><circle cx="810.6" cy="91.4" r="2.8" fill="#3d3d3d" stroke="#a0a0a0" stroke-width="0.9"/>
<path d="M802 101.6 h8 v5.4 h-8z" fill="none" stroke="#8e8e8e" stroke-width="1"/><circle cx="810.6" cy="107.6" r="2.8" fill="#3d3d3d" stroke="#a0a0a0" stroke-width="0.9"/><path d="M808 102.6 l4 -4" stroke="#f0a030" stroke-width="1.3"/>
<rect x="822.1" y="68.3" width="8.6" height="8.6" fill="none" stroke="#dcdcdc" stroke-width="1.5"/><rect x="825.1" y="71.3" width="2.6" height="2.6" fill="#dcdcdc"/><rect x="837.7" y="68.3" width="8.6" height="8.6" fill="none" stroke="#dcdcdc" stroke-width="1.5"/><rect x="840.7" y="71.3" width="2.6" height="2.6" fill="#dcdcdc"/><rect x="822.1" y="83.3" width="8.6" height="8.6" fill="none" stroke="#dcdcdc" stroke-width="1.5"/><rect x="825.1" y="86.3" width="2.6" height="2.6" fill="#dcdcdc"/><rect x="833.0" y="67.6" width="1.6" height="4.0" fill="#dcdcdc"/><rect x="833.0" y="73.6" width="1.6" height="2.4" fill="#dcdcdc"/><rect x="832.8" y="79.0" width="3.0" height="2.0" fill="#dcdcdc"/><rect x="837.4" y="79.2" width="4.0" height="1.6" fill="#dcdcdc"/><rect x="843.4" y="79.0" width="3.0" height="3.0" fill="#dcdcdc"/><rect x="833.0" y="83.0" width="2.0" height="3.0" fill="#dcdcdc"/><rect x="837.0" y="82.6" width="3.0" height="2.0" fill="#dcdcdc"/><rect x="841.0" y="83.6" width="5.4" height="1.6" fill="#dcdcdc"/><rect x="835.4" y="86.6" width="2.0" height="5.6" fill="#dcdcdc"/><rect x="839.4" y="87.0" width="2.0" height="2.4" fill="#dcdcdc"/><rect x="843.0" y="86.2" width="1.6" height="6.0" fill="#dcdcdc"/><rect x="838.4" y="90.2" width="3.6" height="2.0" fill="#dcdcdc"/><rect x="833.0" y="88.6" width="1.6" height="3.6" fill="#dcdcdc"/>
<path d="M841.8 113.0 L845.0 116.6 L848.2 113.0" fill="none" stroke="#b9b9b9" stroke-width="1.1"/>
<path d="M868 77 l9.6 -3.6 l5 6 l-8.6 8.4z" fill="#3f8ef5"/><path d="M877.6 73.4 l5 6 l3.6 -3 l-5.4 -6.4z" fill="#f0b040"/><path d="M884.6 72.4 l3.6 -3.6 l2.6 2.6 l-3.8 3.6z" fill="#f0b040"/>
<path d="M904 67.6 h10.6" stroke="#dcdcdc" stroke-width="1"/><path d="M904 71.6 h10.6" stroke="#dcdcdc" stroke-width="1.8"/><path d="M904 76.6 h10.6" stroke="#dcdcdc" stroke-width="2.8"/>
<path d="M904 84 h10.6 M904 93 h10.6" stroke="#777" stroke-width="1.4" stroke-dasharray="1.4 1.4"/><path d="M904 88.6 h10.6" stroke="#888" stroke-width="1.2"/>
<rect x="904.2" y="100.0" width="2.6" height="2.6" fill="#4a86ea"/>
<rect x="908.1" y="100.0" width="2.6" height="2.6" fill="#c8c8c8"/>
<rect x="912.0" y="100.0" width="2.6" height="2.6" fill="#c8c8c8"/>
<rect x="904.2" y="103.9" width="2.6" height="2.6" fill="#38a050"/>
<rect x="908.1" y="103.9" width="2.6" height="2.6" fill="#38a050"/>
<rect x="912.0" y="103.9" width="2.6" height="2.6" fill="#e8e8e8"/>
<rect x="904.2" y="107.8" width="2.6" height="2.6" fill="#d04040"/>
<rect x="908.1" y="107.8" width="2.6" height="2.6" fill="#d04040"/>
<rect x="912.0" y="107.8" width="2.6" height="2.6" fill="#e8e8e8"/>
<path d="M1052.2 72.8 h3 l-1.5 1.8z" fill="#d6d6d6"/>
<path d="M1052.2 88.2 h3 l-1.5 1.8z" fill="#d6d6d6"/>
<path d="M1052.2 104.7 h3 l-1.5 1.8z" fill="#d6d6d6"/>
<path d="M919.5 72.9 h64.7 M922 89.1 h62" stroke="#8c8c8c" stroke-width="0.9"/>
<rect x="919.8" y="100.1" width="9.8" height="10" fill="#ffffff"/>
<rect x="1069.4" y="70" width="15" height="11" fill="#c9c9c9"/><rect x="1074.6" y="76.4" width="15" height="11.6" fill="#e6e6e6" stroke="#3f3f3f" stroke-width="0.8"/>
<rect x="1067.4" y="68.0" width="3.4" height="3.4" fill="#3f3f3f" stroke="#3f8ef0" stroke-width="1"/>
<rect x="1089.4" y="68.0" width="3.4" height="3.4" fill="#3f3f3f" stroke="#3f8ef0" stroke-width="1"/>
<rect x="1067.4" y="86.6" width="3.4" height="3.4" fill="#3f3f3f" stroke="#3f8ef0" stroke-width="1"/>
<rect x="1089.4" y="86.6" width="3.4" height="3.4" fill="#3f3f3f" stroke="#3f8ef0" stroke-width="1"/>
<rect x="1099.4" y="68.3" width="6" height="4.6" fill="#d0d0d0"/><rect x="1102" y="71.3" width="6" height="4.6" fill="#f0f0f0" stroke="#3f3f3f" stroke-width="0.5"/>
<rect x="1099.4" y="84.5" width="6" height="4.6" fill="#d0d0d0"/><rect x="1102" y="87.5" width="6" height="4.6" fill="#f0f0f0" stroke="#3f3f3f" stroke-width="0.5"/>
<rect x="1099.4" y="100.6" width="6" height="4.6" fill="#d0d0d0"/><rect x="1102" y="103.6" width="6" height="4.6" fill="#f0f0f0" stroke="#3f3f3f" stroke-width="0.5"/>
<rect x="1103.4" y="71.4" width="4" height="3.4" fill="#f0b040"/>
<path d="M1103 88 l5 -5" stroke="#f0a030" stroke-width="1.6"/>
<path d="M1104 108 l3 3 l1.2 -3.6z" fill="#3f8ef0"/>
<path d="M1127 72.6 h22" stroke="#3f8ef0" stroke-width="1.1"/><path d="M1127 69.8 v5.6 M1149 69.8 v5.6" stroke="#3f8ef0" stroke-width="1.4"/><path d="M1128 72.6 l3 -2 v4z M1148 72.6 l-3 -2 v4z" fill="#3f8ef0"/>
<path d="M1127 88.6 v-6 h22.6 v6" fill="none" stroke="#c0c0c0" stroke-width="1.2"/><path d="M1131.4 83 v3 M1135.4 83 v3 M1139.4 83 v3 M1143.4 83 v3" stroke="#c0c0c0" stroke-width="1"/>
<path d="M1134.4 114.4 L1138.0 118.4 L1141.6 114.4" fill="none" stroke="#b9b9b9" stroke-width="1.1"/>
<path d="M1161.4 67.4 v9.6 h9.6" fill="none" stroke="#9a9a9a" stroke-width="1"/><path d="M1163 74.6 l4.6 -4.6" stroke="#9a9a9a" stroke-width="0.9" stroke-dasharray="1.2 1"/><circle cx="1161.4" cy="67.6" r="0.9" fill="#c8c8c8"/><circle cx="1170.6" cy="77" r="0.9" fill="#c8c8c8"/>
<rect x="1160.8" y="83.8" width="9.6" height="10.4" fill="none" stroke="#dcdcdc" stroke-width="1.1"/><path d="M1160.8 87.4 h9.6 M1160.8 90.8 h9.6 M1164 87.4 v6.8 M1167.2 87.4 v6.8" stroke="#dcdcdc" stroke-width="0.9"/>
<path d="M1161.4 111.4 v-9.6 h10" fill="none" stroke="#8a8a8a" stroke-width="1"/><path d="M1161.4 111.4 v-3" stroke="#3f8ef0" stroke-width="1.1"/>
<path d="M1178.6 67.6 h5 v2" fill="none" stroke="#3f8ef0" stroke-width="1"/><rect x="1181.6" y="70.6" width="5.6" height="6.4" fill="none" stroke="#dcdcdc" stroke-width="1.3"/><path d="M1183 73.8 h3" stroke="#dcdcdc" stroke-width="1"/>
<path d="M1192.2 71.2 L1195.4 74.8 L1198.6 71.2" fill="none" stroke="#b9b9b9" stroke-width="1.1"/>
<rect x="1177.6" y="84.6" width="6.6" height="5" fill="#3f8ef0"/><rect x="1180.4" y="87.4" width="7.6" height="5.6" fill="#e2e2e2" stroke="#3f3f3f" stroke-width="0.6"/>
<path d="M1192.2 87.6 L1195.4 91.2 L1198.6 87.6" fill="none" stroke="#b9b9b9" stroke-width="1.1"/>
<rect x="1178" y="101.6" width="7.6" height="7" fill="none" stroke="#a8a8a8" stroke-width="1"/><path d="M1184 106.6 l3 3.4" stroke="#3f8ef0" stroke-width="1.6"/><circle cx="1186.6" cy="100.6" r="1.2" fill="#f0b040"/>
<path d="M1192.2 103.8 L1195.4 107.4 L1198.6 103.8" fill="none" stroke="#b9b9b9" stroke-width="1.1"/>
<path d="M1212 74 h12 v17 h-12z" fill="#dadada"/><path d="M1215.4 73.6 a2.8 2.8 0 0 1 5.4 0 h1.6 v1.6 h-8.6 v-1.6z" fill="#f0f0f0"/>
<path d="M1220.6 78.6 h8 l4.2 4.2 v9.4 h-12.2z" fill="#3f8ef5"/><path d="M1228.6 78.6 v4.2 h4.2z" fill="#9cc4ff"/>
<path d="M1218.4 114.4 L1222.0 118.4 L1225.6 114.4" fill="none" stroke="#b9b9b9" stroke-width="1.1"/>
<path d="M1242 67.4 h6 l3.6 3.6 v7.6 h-9.6z" fill="#3f8ef5"/><path d="M1244 73 h5.4 m-2 -1.6 l2 1.6 l-2 1.6" fill="none" stroke="#e8f0ff" stroke-width="0.9"/>
<path d="M1242.6 84 l7.6 8 M1250.8 84 l-7.6 8" stroke="#dadada" stroke-width="1.3"/><circle cx="1243.2" cy="93" r="1.3" fill="none" stroke="#dadada" stroke-width="0.9"/><circle cx="1250.2" cy="93" r="1.3" fill="none" stroke="#dadada" stroke-width="0.9"/>
<path d="M1242.4 100.4 h4.4 l2.2 2.2 v5.4 h-6.6z" fill="#bdbdbd"/><path d="M1244.8 102.8 h4 l2.6 2.6 v5.6 h-6.6z" fill="#e4e4e4"/>
<path d="M181.4 231.2 v7.8" stroke="#7a7a7a" stroke-width="1.6"/><path d="M188.8 230.8 v8.6 l-6.2 -4.3z" fill="#7a7a7a"/>
<circle cx="217.3" cy="235.1" r="13" fill="#1fb25c"/><path d="M213.4 229.4 l9.6 5.7 l-9.6 5.7z" fill="#ffffff" stroke="#ffffff" stroke-width="1" stroke-linejoin="round"/>
<path d="M253.3 231.2 v7.8" stroke="#ececec" stroke-width="1.6"/><path d="M246 230.8 v8.6 l6.2 -4.3z" fill="#ececec"/>
<path d="M172.2 263.2 H261.3" stroke="#ffffff" stroke-width="2.4" stroke-linecap="round"/>
<path d="M293.1 224.3 V252 M487.7 224.3 V252" stroke="#363636" stroke-width="1.5"/>
<circle cx="324.6" cy="236.3" r="12.9" fill="#646464"/><path d="M319 236.3 h11.2 M324.6 230.7 v11.2" stroke="#f4f4f4" stroke-width="1.6"/>
<circle cx="367.9" cy="236.3" r="13" fill="#626262"/>
<path d="M360.6 236.6 q7.3 -7.6 14.6 0 q-7.3 7.6 -14.6 0z" fill="none" stroke="#ececec" stroke-width="1.3"/><circle cx="367.9" cy="236.6" r="2.5" fill="none" stroke="#ececec" stroke-width="1.2"/><path d="M361.6 241.4 l12.8 -9.8" stroke="#ececec" stroke-width="1.2"/>
<circle cx="410.8" cy="236" r="10.4" fill="#5b5b5b"/><path d="M405.6 232.8 h9 M405.6 236 h6.6 M405.6 239.2 h5" stroke="#808080" stroke-width="1.2"/><path d="M413 237.4 v3.6 l3 -1.8z" fill="#808080"/>
<circle cx="454.6" cy="236.3" r="13" fill="#626262"/>
<path d="M459.40 238.29 L461.62 239.21 M456.59 241.10 L457.51 243.32 M452.61 241.10 L451.69 243.32 M449.80 238.29 L447.58 239.21 M449.80 234.31 L447.58 233.39 M452.61 231.50 L451.69 229.28 M456.59 231.50 L457.51 229.28 M459.40 234.31 L461.62 233.39 " stroke="#f2f2f2" stroke-width="3.4"/><circle cx="454.6" cy="236.3" r="5.2" fill="#626262" stroke="#f2f2f2" stroke-width="2.2"/>
<circle cx="519.4" cy="236.3" r="10.4" fill="none" stroke="#f2f2f2" stroke-width="1.4"/><path d="M515.4 232.3 l8 8 M523.4 232.3 l-8 8" stroke="#f2f2f2" stroke-width="1.4"/>
<path d="M549 212.6 l-2.8 2.8 M546.2 212.8 v2.6 h2.6 M542 219.8 l2.8 -2.8 M544.8 219.6 v-2.6 h-2.6" fill="none" stroke="#d8d8d8" stroke-width="0.9"/>
<path d="M147.4 298.4 h9.6 l-3.6 4.4 v4.6 l-2.4 -1.4 v-3.2z" fill="none" stroke="#e2e2e2" stroke-width="1.1" stroke-linejoin="round"/><path d="M156.4 303 v5" stroke="#e2e2e2" stroke-width="1.2" stroke-dasharray="1.2 0.8"/>
<path d="M166.6 299.6 h10.6 M169.6 299.4 v-1.8 h4.6 v1.8 M167.8 299.8 v8.6 h8.2 v-8.6 M170.6 302.4 v3.6 M173.2 302.4 v3.6" fill="none" stroke="#e2e2e2" stroke-width="1.1"/>
<path d="M442.7 334 c-2 -2.6 -3.8 -4.4 -3.8 -6.6 a3.8 3.8 0 0 1 7.6 0 c0 2.2 -1.8 4 -3.8 6.6z" fill="none" stroke="#ececec" stroke-width="1"/><circle cx="442.7" cy="327.4" r="1.2" fill="#ececec"/>
<path d="M468.6 326 a5 5 0 1 0 0.6 3.6" fill="none" stroke="#ececec" stroke-width="1"/><path d="M462.6 326.4 v4.4 l3.4 -2.2z" fill="#ececec"/><path d="M467.4 324.6 l2 0.4 l-0.6 2z" fill="#ececec"/>
<path d="M26.4 143.8 h14.6 M26.4 148.7 h14.6 M26.4 153.6 h14.6" stroke="#ededed" stroke-width="1.9"/>
<path d="M153 144.6 l9 9 M162 144.6 l-9 9" stroke="#e6e6e6" stroke-width="1.2"/>
<path d="M174.6 148.6 h12.6 M180.9 142.2 v12.8" stroke="#e8e8e8" stroke-width="1.3"/>
<path d="M24 667.4 h12 M24 669 h12" stroke="#5a5a5a" stroke-width="0.8"/>
<path d="M26.6 674.2 l7.8 7.8 M34.4 674.2 l-7.8 7.8" stroke="#dedede" stroke-width="1.1"/>
<path d="M26.8 694 l1 -3 l5 -5 l1.6 1.6 l-5 5z" fill="none" stroke="#c8c8c8" stroke-width="0.9"/><path d="M33 695 h2.6" stroke="#c8c8c8" stroke-width="0.9"/>
<path d="M27 703.2 h14.4 M27 707.8 h14.4 M27 712.4 h14.4" stroke="#ededed" stroke-width="1.9"/>
<path d="M159.8 703.6 v9.4" stroke="#6a6a6a" stroke-width="1"/>
<path d="M169.4 708.2 h12.4 M175.6 702 v12.4" stroke="#e8e8e8" stroke-width="1.3"/>
<path d="M776.2 703.3 v11 M774.7 704.8 h11 M780.2 703.3 v11 M774.7 708.8 h11 M784.2 703.3 v11 M774.7 712.8 h11 " stroke="#d8d8d8" stroke-width="1"/>
<path d="M792.9 703.3 v11 M791.4 704.8 h11 M796.9 703.3 v11 M791.4 708.8 h11 M800.9 703.3 v11 M791.4 712.8 h11 " stroke="#d8d8d8" stroke-width="1"/>
<rect x="811" y="706.4" width="5.4" height="6" fill="none" stroke="#d8d8d8" stroke-width="1.3"/><path d="M807.4 704.6 h4 M809.4 702.6 v4" stroke="#d8d8d8" stroke-width="1"/>
<path d="M824 702.6 v11.6 h11" fill="none" stroke="#d8d8d8" stroke-width="1.3"/>
<circle cx="844.6" cy="708.8" r="4.4" fill="none" stroke="#d8d8d8" stroke-width="1.1"/><path d="M844.6 708.8 l4.4 -5" stroke="#d8d8d8" stroke-width="1.1"/>
<rect x="857" y="704" width="9.4" height="9.4" fill="none" stroke="#d8d8d8" stroke-width="1.4"/>
<path d="M872.6 714 h10.4 M872.6 714 l9 -10" fill="none" stroke="#d8d8d8" stroke-width="1.1"/>
<path d="M893.8 702.6 v12 M887.8 708.6 h12" stroke="#d8d8d8" stroke-width="1.8"/>
<rect x="905.6" y="703.6" width="9.8" height="9.8" fill="none" stroke="#d8d8d8" stroke-width="1.2"/><rect x="907.8" y="705.8" width="5.4" height="5.4" fill="#9a9a9a"/>
<circle cx="926.8" cy="708.6" r="5" fill="none" stroke="#d8d8d8" stroke-width="1.1"/><path d="M924.6 708.6 h5 M927 706.2 v4.8" stroke="#d8d8d8" stroke-width="1"/>
<path d="M937.6 704.6 h11 M937.6 712.6 h11" stroke="#9a9a9a" stroke-width="1"/><path d="M937.6 708.6 h11" stroke="#5a8ad8" stroke-width="2.4"/>
<path d="M957.6 703.6 l2.6 9 l1.4 -3.4 l2.6 -0.6z" fill="#d8d8d8"/><path d="M956 702.6 h5" stroke="#5a8ad8" stroke-width="1"/>
<path d="M970.2 710.8 l5.4 2.3 l5.4 -2.3" fill="none" stroke="#b0b0b0" stroke-width="1.1"/><path d="M970.2 708.2 l5.4 2.3 l5.4 -2.3" fill="none" stroke="#b0b0b0" stroke-width="1.1"/><path d="M970.2 705.6 l5.4 -2.4 l5.4 2.4 l-5.4 2.4z" fill="#e0e0e0"/>
<circle cx="980" cy="712.6" r="1.6" fill="#4a8ae8"/>
<circle cx="991.4" cy="707.6" r="4.4" fill="#3d5f96" stroke="#9cb4d8" stroke-width="1.2"/><path d="M994.6 711 l3.4 3.6" stroke="#c8c8c8" stroke-width="1.6"/>
<rect x="1003.6" y="706.6" width="7" height="5.6" fill="#4a86ea"/><rect x="1006.4" y="703.8" width="7" height="5.6" fill="#e6e6e6"/>
<path d="M1024.5 702.6 l1.2 5 l4 5.4 h-2.6 l-2.6 -3.4 l-2.6 3.4 h-2.6 l4 -5.4z" fill="#d8d8d8"/>
<path d="M1047.0 707.8 L1049.0 710.2 L1051.0 707.8" fill="none" stroke="#9a9a9a" stroke-width="0.9"/>
<path d="M1058.7 702.6 l1.2 5 l4 5.4 h-2.6 l-2.6 -3.4 l-2.6 3.4 h-2.6 l4 -5.4z" fill="#d8d8d8"/><circle cx="1063.4" cy="703.6" r="1.4" fill="#f0b040"/>
<path d="M1076 702.6 l1.2 5 l4 5.4 h-2.6 l-2.6 -3.4 l-2.6 3.4 h-2.6 l4 -5.4z" fill="#8a8a8a"/><circle cx="1080.6" cy="703.6" r="1.2" fill="#8a8a8a"/>
<rect x="1087" y="703" width="10.8" height="11.2" fill="none" stroke="#d8d8d8" stroke-width="1.3"/><path d="M1087 706.8 h10.8 M1087 710.4 h10.8 M1092.4 703 v11.2" stroke="#d8d8d8" stroke-width="1.1"/>
<path d="M1137.30 708.80 L1139.50 708.80 M1136.42 710.92 L1137.98 712.48 M1134.30 711.80 L1134.30 714.00 M1132.18 710.92 L1130.62 712.48 M1131.30 708.80 L1129.10 708.80 M1132.18 706.68 L1130.62 705.12 M1134.30 705.80 L1134.30 703.60 M1136.42 706.68 L1137.98 705.12 " stroke="#ececec" stroke-width="2.4"/><circle cx="1134.3" cy="708.8" r="3.2" fill="#3a3a3a" stroke="#ececec" stroke-width="2"/>
<rect x="1145.4" y="708" width="6.6" height="5" fill="#3f86f0"/><path d="M1150.4 708 v-2 a2 2 0 0 1 4 0" fill="none" stroke="#3f86f0" stroke-width="1.1"/>
<path d="M1166.5 703 a3.6 3.6 0 0 1 2.2 6.4 v1.2 h-4.4 v-1.2 a3.6 3.6 0 0 1 2.2 -6.4z" fill="#f2b43a"/><path d="M1164.9 711.8 h3.2 v1.4 h-3.2z" fill="#d89a28"/>
<rect x="1177.2" y="703.6" width="10.6" height="8" fill="#4a86ea"/><path d="M1177.2 703.6 l5.3 4 l5.3 -4" fill="none" stroke="#dce8ff" stroke-width="0.9"/><rect x="1183.8" y="709.4" width="4.4" height="4.4" fill="#e03a3a"/>
<path d="M1194.4 712.6 a5.2 5.2 0 1 1 10.2 0" fill="none" stroke="#c8c8c8" stroke-width="1.2"/><path d="M1199.6 709.6 l-2.6 -3" stroke="#c8c8c8" stroke-width="1.3"/>
<rect x="1211" y="703.6" width="9.6" height="9.6" fill="none" stroke="#d0d0d0" stroke-width="1.1"/><path d="M1216.6 705.6 h2.2 v2.2 M1215 711.4 h-2.2 v-2.2" fill="none" stroke="#d0d0d0" stroke-width="0.9"/>
</svg>
<span class="t ls" style="left:192.2px;top:27px;font-size:10.20px;line-height:13px;color:#c4c4c4;transform:scaleX(0.911);">2D Drafting</span>
<span class="t ls" style="left:646.6px;top:28px;font-size:9.60px;line-height:12px;color:#ececec;font-weight:bold;transform:scaleX(0.942);">GstarCAD 2025 Professional - [VOICEANNOTATION*]</span>
<span class="t ls" style="left:54.1px;top:48px;font-size:9.80px;line-height:13px;color:#f0f0f0;transform:scaleX(0.941);">Home</span>
<span class="t ls" style="left:95.4px;top:48px;font-size:9.80px;line-height:13px;color:#d6d6d6;transform:scaleX(0.934);">Insert</span>
<span class="t ls" style="left:135.6px;top:48px;font-size:9.80px;line-height:13px;color:#d6d6d6;transform:scaleX(0.986);">Annotation</span>
<span class="t ls" style="left:198.0px;top:48px;font-size:9.80px;line-height:13px;color:#d6d6d6;transform:scaleX(0.958);">3D</span>
<span class="t ls" style="left:225.3px;top:48px;font-size:9.80px;line-height:13px;color:#d6d6d6;transform:scaleX(0.900);">Surface</span>
<span class="t ls" style="left:271.9px;top:48px;font-size:9.80px;line-height:13px;color:#d6d6d6;transform:scaleX(0.939);">Mesh</span>
<span class="t ls" style="left:309.9px;top:48px;font-size:9.80px;line-height:13px;color:#d6d6d6;transform:scaleX(0.952);">Layout</span>
<span class="t ls" style="left:353.7px;top:48px;font-size:9.80px;line-height:13px;color:#d6d6d6;transform:scaleX(0.911);">View</span>
<span class="t ls" style="left:388.6px;top:48px;font-size:9.80px;line-height:13px;color:#d6d6d6;transform:scaleX(0.943);">Manage</span>
<span class="t ls" style="left:438.7px;top:48px;font-size:9.80px;line-height:13px;color:#d6d6d6;transform:scaleX(0.914);">Export</span>
<span class="t ls" style="left:481.3px;top:48px;font-size:9.80px;line-height:13px;color:#d6d6d6;transform:scaleX(0.903);">Help</span>
<span class="t ls" style="left:516.3px;top:48px;font-size:9.80px;line-height:13px;color:#d6d6d6;transform:scaleX(0.907);">BIM</span>
<span class="t ls" style="left:551.9px;top:50px;font-size:9.50px;line-height:12px;color:#cacaca;transform:scaleX(0.860);">Express</span>
<span class="t ls" style="left:601.4px;top:50px;font-size:9.50px;line-height:12px;color:#cacaca;transform:scaleX(0.964);">Application</span>
<span class="t ls" style="left:662.3px;top:50px;font-size:9.50px;line-height:12px;color:#cacaca;transform:scaleX(0.877);">Cloud Note</span>
<span class="t ls" style="left:721.3px;top:50px;font-size:9.50px;line-height:12px;color:#cacaca;transform:scaleX(0.886);">Collaboration</span>
<span class="t ls" style="left:1164.3px;top:49px;font-size:9.60px;line-height:12px;color:#d6d6d6;transform:scaleX(0.912);">Appearance</span>
<span class="t ls" style="left:94.7px;top:124px;font-size:9.60px;line-height:12px;color:#d2d2d2;transform:scaleX(0.924);">Draw</span>
<span class="t ls" style="left:275.0px;top:124px;font-size:9.60px;line-height:12px;color:#d2d2d2;transform:scaleX(1.019);">Modify</span>
<span class="t ls" style="left:439.2px;top:124px;font-size:9.60px;line-height:12px;color:#d2d2d2;transform:scaleX(1.006);">Annotation</span>
<span class="t ls" style="left:636.6px;top:124px;font-size:9.60px;line-height:12px;color:#d2d2d2;transform:scaleX(0.908);">Layer</span>
<span class="t ls" style="left:797.9px;top:124px;font-size:9.60px;line-height:12px;color:#d2d2d2;transform:scaleX(0.916);">Block</span>
<span class="t ls" style="left:936.5px;top:124px;font-size:9.60px;line-height:12px;color:#d2d2d2;transform:scaleX(0.939);">Properties</span>
<span class="t ls" style="left:1073.4px;top:124px;font-size:9.60px;line-height:12px;color:#d2d2d2;transform:scaleX(0.947);">Groups</span>
<span class="t ls" style="left:1143.9px;top:124px;font-size:9.60px;line-height:12px;color:#d2d2d2;transform:scaleX(0.989);">Utilities</span>
<span class="t ls" style="left:1211.0px;top:124px;font-size:9.60px;line-height:12px;color:#d2d2d2;transform:scaleX(0.954);">Clipboard</span>
<span class="t ls" style="left:33.0px;top:95px;font-size:9.80px;line-height:13px;color:#dedede;transform:scaleX(0.928);">Line</span>
<span class="t ls" style="left:59.3px;top:95px;font-size:9.80px;line-height:13px;color:#dedede;transform:scaleX(0.909);">Polyline</span>
<span class="t ls" style="left:97.6px;top:95px;font-size:9.80px;line-height:13px;color:#dedede;transform:scaleX(0.902);">Circle</span>
<span class="t ls" style="left:134.6px;top:95px;font-size:9.80px;line-height:13px;color:#dedede;transform:scaleX(0.912);">Arc</span>
<span class="t ls" style="left:207.4px;top:67px;font-size:9.60px;line-height:12px;color:#dedede;transform:scaleX(0.817);">Erase</span>
<span class="t ls" style="left:248.0px;top:67px;font-size:9.60px;line-height:12px;color:#dedede;transform:scaleX(0.922);">Explode</span>
<span class="t ls" style="left:299.6px;top:67px;font-size:9.60px;line-height:12px;color:#dedede;transform:scaleX(0.942);">Boolean</span>
<span class="t ls" style="left:207.2px;top:83px;font-size:9.60px;line-height:12px;color:#dedede;transform:scaleX(0.928);">Offset</span>
<span class="t ls" style="left:250.6px;top:83px;font-size:9.60px;line-height:12px;color:#dedede;transform:scaleX(0.934);">Stretch</span>
<span class="t ls" style="left:299.0px;top:83px;font-size:9.60px;line-height:12px;color:#dedede;transform:scaleX(0.998);">Mirror</span>
<span class="t ls" style="left:207.2px;top:99px;font-size:9.60px;line-height:12px;color:#dedede;transform:scaleX(0.929);">Move</span>
<span class="t ls" style="left:248.8px;top:99px;font-size:9.60px;line-height:12px;color:#dedede;transform:scaleX(0.948);">Rotate</span>
<span class="t ls" style="left:295.0px;top:99px;font-size:9.60px;line-height:12px;color:#dedede;transform:scaleX(0.937);">Copy</span>
<span class="t ls" style="left:403.6px;top:64px;font-size:25.50px;line-height:33px;color:#e2e2e2;transform:scaleX(1.070);-webkit-text-stroke:.55px #e2e2e2;">A</span>
<span class="t ls" style="left:404.4px;top:95px;font-size:9.80px;line-height:13px;color:#dedede;transform:scaleX(0.835);">Text</span>
<span class="t ls" style="left:429.9px;top:95px;font-size:9.80px;line-height:13px;color:#dedede;transform:scaleX(0.931);">Dimension</span>
<span class="t ls" style="left:491.5px;top:67px;font-size:9.60px;line-height:12px;color:#dedede;transform:scaleX(0.893);">Table</span>
<span class="t ls" style="left:491.5px;top:83px;font-size:9.60px;line-height:12px;color:#dedede;transform:scaleX(0.907);">Leader</span>
<span class="t ls" style="left:491.5px;top:99px;font-size:9.60px;line-height:12px;color:#dedede;transform:scaleX(0.903);">Linear</span>
<span class="t ls" style="left:547.3px;top:95px;font-size:9.80px;line-height:13px;color:#dedede;transform:scaleX(0.860);">Layer</span>
<span class="t ls" style="left:537.0px;top:107px;font-size:9.80px;line-height:13px;color:#dedede;transform:scaleX(0.931);">Properties</span>
<span class="t ls" style="left:634.2px;top:99px;font-size:9.40px;line-height:12px;color:#b4b4b4;transform:scaleX(0.900);">0</span>
<span class="t ls" style="left:770.7px;top:95px;font-size:9.80px;line-height:13px;color:#dedede;transform:scaleX(0.910);">Insert</span>
<span class="t ls" style="left:826.2px;top:95px;font-size:9.80px;line-height:13px;color:#dedede;transform:scaleX(0.900);">QR</span>
<span class="t ls" style="left:816.6px;top:107px;font-size:9.80px;line-height:13px;color:#dedede;transform:scaleX(0.879);">Code</span>
<span class="t ls" style="left:867.8px;top:95px;font-size:9.80px;line-height:13px;color:#dedede;transform:scaleX(0.880);">Match</span>
<span class="t ls" style="left:858.2px;top:107px;font-size:9.80px;line-height:13px;color:#dedede;transform:scaleX(0.940);">Properties</span>
<span class="t ls" style="left:989.5px;top:67px;font-size:9.60px;line-height:12px;color:#c6c6c6;transform:scaleX(0.883);">ByLayer</span>
<span class="t ls" style="left:989.5px;top:83px;font-size:9.60px;line-height:12px;color:#c6c6c6;transform:scaleX(0.899);">CONTINUOUS</span>
<span class="t ls" style="left:932.6px;top:99px;font-size:9.60px;line-height:12px;color:#d0d0d0;transform:scaleX(0.880);">ByLayer</span>
<span class="t ls" style="left:1066.8px;top:95px;font-size:9.80px;line-height:13px;color:#dedede;transform:scaleX(0.951);">Group</span>
<span class="t ls" style="left:1120.5px;top:95px;font-size:9.80px;line-height:13px;color:#dedede;transform:scaleX(0.900);">Measure</span>
<span class="t ls" style="left:1211.3px;top:95px;font-size:9.80px;line-height:13px;color:#dedede;transform:scaleX(0.850);">Paste</span>
<span class="t ls" style="left:141.7px;top:257px;font-size:8.60px;line-height:11px;color:#e0e0e0;transform:scaleX(0.995);">00: 00</span>
<span class="t ls" style="left:263.8px;top:257px;font-size:8.60px;line-height:11px;color:#e0e0e0;transform:scaleX(0.970);">00: 03</span>
<span class="t ls" style="left:313.7px;top:255px;font-size:11.40px;line-height:15px;color:#ececec;transform:scaleX(1.004);-webkit-text-stroke:.25px #ececec;">New</span>
<span class="t ls" style="left:346.7px;top:255px;font-size:11.40px;line-height:15px;color:#ececec;transform:scaleX(1.024);-webkit-text-stroke:.25px #ececec;">Hide All</span>
<span class="t ls" style="left:399.9px;top:255px;font-size:11.40px;line-height:15px;color:#e2e2e2;transform:scaleX(0.921);-webkit-text-stroke:.25px #e2e2e2;">Lists</span>
<span class="t ls" style="left:433.7px;top:255px;font-size:11.40px;line-height:15px;color:#ececec;transform:scaleX(0.986);-webkit-text-stroke:.25px #ececec;">Settings</span>
<span class="t ls" style="left:504.8px;top:255px;font-size:11.40px;line-height:15px;color:#ececec;transform:scaleX(0.947);-webkit-text-stroke:.25px #ececec;">Close</span>
<span class="t ls" style="left:151.0px;top:321px;font-size:12.60px;line-height:16px;color:#f0f0f0;transform:scaleX(1.044);">Manager</span>
<span class="t ls" style="left:222.6px;top:321px;font-size:12.60px;line-height:16px;color:#f0f0f0;transform:scaleX(0.983);">00:03</span>
<span class="t ls" style="left:277.3px;top:321px;font-size:12.60px;line-height:16px;color:#f0f0f0;transform:scaleX(1.124);">point</span>
<span class="t ls" style="left:326.0px;top:321px;font-size:12.60px;line-height:16px;color:#f0f0f0;transform:scaleX(1.047);">2024/05/16 19:34</span>
<span class="t ls" style="left:151.6px;top:342px;font-size:12.60px;line-height:16px;color:#f0f0f0;transform:scaleX(1.005);">Engineer</span>
<span class="t ls" style="left:222.6px;top:342px;font-size:12.60px;line-height:16px;color:#f0f0f0;transform:scaleX(0.983);">00:06</span>
<span class="t ls" style="left:276.0px;top:342px;font-size:12.60px;line-height:16px;color:#f0f0f0;transform:scaleX(1.024);">range</span>
<span class="t ls" style="left:326.0px;top:342px;font-size:12.60px;line-height:16px;color:#f0f0f0;transform:scaleX(1.047);">2024/05/16 19:35</span>
<span class="t ls" style="left:155.8px;top:363px;font-size:12.60px;line-height:16px;color:#f0f0f0;transform:scaleX(1.045);">Worker</span>
<span class="t ls" style="left:222.6px;top:363px;font-size:12.60px;line-height:16px;color:#f0f0f0;transform:scaleX(0.983);">00:04</span>
<span class="t ls" style="left:274.6px;top:363px;font-size:12.60px;line-height:16px;color:#f0f0f0;transform:scaleX(1.077);">object</span>
<span class="t ls" style="left:326.0px;top:363px;font-size:12.60px;line-height:16px;color:#f0f0f0;transform:scaleX(1.047);">2024/05/16 19:37</span>
<span class="t ls" style="left:55.8px;top:143px;font-size:9.30px;line-height:12px;color:#f2f2f2;font-weight:bold;transform:scaleX(0.985);">VOICEANNOTATION*</span>
<span class="t lm" style="left:42.6px;top:667px;font-size:9.91px;line-height:13px;color:#ededed;transform:scaleX(1.000);">Automatic save to C:\Users\Administrator\AppData\Local\Temp\VOICEANNOTATION_1_00000294A3C64C10_5088.sv$ ...</span>
<span class="t lm" style="left:42.6px;top:682px;font-size:9.91px;line-height:13px;color:#ededed;transform:scaleX(1.000);">Command:</span>
<span class="t ls" style="left:57.7px;top:702px;font-size:9.60px;line-height:12px;color:#f2f2f2;font-weight:bold;transform:scaleX(0.977);">Model</span>
<span class="t ls" style="left:96.6px;top:702px;font-size:9.60px;line-height:12px;color:#b8b8b8;transform:scaleX(0.927);">Presentación1</span>
<span class="t ls" style="left:636.7px;top:704px;font-size:8.40px;line-height:11px;color:#a8a8a8;transform:scaleX(1.041);">1.39E+02, 2.09E+02, 30.00</span>
<span class="t ls" style="left:1032.7px;top:704px;font-size:8.40px;line-height:11px;color:#b4b4b4;transform:scaleX(1.053);">1:1</span>
<span class="t ls" style="left:1226.2px;top:703px;font-size:9.40px;line-height:12px;color:#c4c4c4;transform:scaleX(0.915);">GstarCAD</span>
</body></html>
